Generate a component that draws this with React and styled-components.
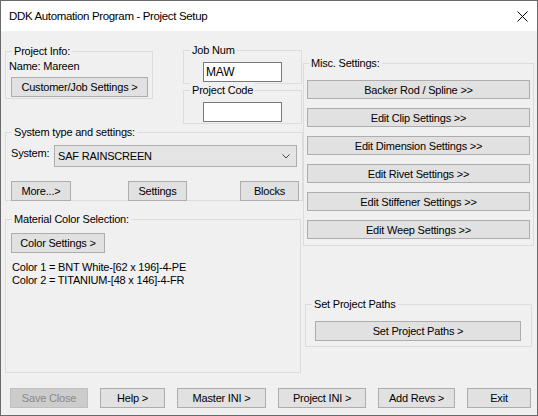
import React from 'react';
import styled, { createGlobalStyle } from 'styled-components';

const Global = createGlobalStyle`
  html, body {
    margin: 0;
    padding: 0;
    background: #f0f0f0;
  }
  * {
    box-sizing: border-box;
  }
`;

const Window = styled.div`
  width: 538px;
  height: 416px;
  border: 1px solid #6a6a6a;
  background: #f0f0f0;
  display: flex;
  flex-direction: column;
  font-family: "Liberation Sans", Arial, sans-serif;
  font-size: 11px;
  letter-spacing: -0.2px;
  color: #000;
  overflow: hidden;
`;

const TitleBar = styled.div`
  height: 30px;
  flex: none;
  background: #fff;
  display: flex;
  align-items: center;
  justify-content: space-between;
  padding: 0 9px 0 8px;
  font-size: 11.5px;
  letter-spacing: -0.35px;
`;

const CloseIcon = styled.svg`
  width: 11px;
  height: 11px;
  margin-top: 1px;
`;

const Body = styled.div`
  flex: 1;
  display: flex;
  flex-direction: column;
`;

const Main = styled.div`
  display: flex;
  padding-left: 4px;
`;

const LeftCol = styled.div`
  width: 298px;
  display: flex;
  flex-direction: column;
  padding-top: 19px;
`;

const RightCol = styled.div`
  display: flex;
  flex-direction: column;
  padding-top: 32px;
`;

const TopRow = styled.div`
  display: flex;
  align-items: flex-start;
`;

const JobStack = styled.div`
  display: flex;
  flex-direction: column;
  gap: 6px;
  margin-left: 30px;
`;

const Group = styled.div`
  position: relative;
  flex: none;
  border: 1px solid #dcdcdc;
  width: ${p => p.$w}px;
  height: ${p => p.$h}px;
  margin-top: ${p => p.$mt || 0}px;
  margin-left: ${p => p.$ml || 0}px;
  display: flex;
  flex-direction: column;
  align-items: flex-start;
`;

const Legend = styled.span`
  position: absolute;
  top: -8px;
  left: ${p => p.$left || 6}px;
  padding: 0 2px;
  line-height: 14px;
  background: #f0f0f0;
  white-space: nowrap;
`;

const Label = styled.div`
  line-height: 13px;
  white-space: nowrap;
  width: ${p => (p.$w ? `${p.$w}px` : 'auto')};
  flex: none;
  margin-left: ${p => p.$ml || 0}px;
  margin-top: ${p => p.$mt || 0}px;
`;

const Button = styled.button`
  flex: none;
  width: ${p => p.$w}px;
  height: ${p => p.$h || 20}px;
  margin-top: ${p => p.$mt || 0}px;
  margin-left: ${p => p.$ml || 0}px;
  padding: 0;
  background: ${p => (p.disabled ? '#cccccc' : '#e1e1e1')};
  border: 1px solid ${p => (p.disabled ? '#bfbfbf' : '#adadad')};
  color: ${p => (p.disabled ? '#8a8a8a' : '#000')};
  font-family: inherit;
  font-size: 11px;
  letter-spacing: -0.2px;
  line-height: 16px;
  text-align: center;
  white-space: nowrap;
`;

const TextBox = styled.div`
  width: 79px;
  height: 20px;
  margin: 11px 0 0 19px;
  background: #fff;
  border: 1px solid #7a7a7a;
  padding: 1px 0 0 2px;
  font-size: 12px;
  line-height: 16px;
`;

const SystemRow = styled.div`
  display: flex;
  align-items: flex-start;
  margin: 12px 0 0 5px;
`;

const Combo = styled.div`
  width: 243px;
  height: 22px;
  background: #e5e5e5;
  border: 1px solid #adadad;
  display: flex;
  align-items: center;
  justify-content: space-between;
  padding: 0 6px 0 3px;
  font-size: 11px;
`;

const Chevron = styled.svg`
  width: 8px;
  height: 5px;
`;

const ButtonRow = styled.div`
  display: flex;
  width: 100%;
  padding: 0 3px 0 5px;
  margin-top: 14px;
`;

const Spacer = styled.div`
  flex: 1;
`;

const MiscList = styled.div`
  display: flex;
  flex-direction: column;
  gap: 9px;
  margin: 16px 0 0 3px;
`;

const ColorLines = styled.div`
  margin: 8px 0 0 6px;
  line-height: 13px;
`;

const Footer = styled.div`
  display: flex;
  gap: 12px;
  padding-left: 9px;
  margin-top: 15px;
`;

const miscButtons = [
  'Backer Rod / Spline >>',
  'Edit Clip Settings >>',
  'Edit Dimension Settings >>',
  'Edit Rivet Settings >>',
  'Edit Stiffener Settings >>',
  'Edit Weep Settings >>',
];

const footerButtons = [
  { label: 'Save  Close', w: 78, disabled: true },
  { label: 'Help >', w: 65 },
  { label: 'Master INI >', w: 89 },
  { label: 'Project INI >', w: 88 },
  { label: 'Add Revs >', w: 77 },
  { label: 'Exit', w: 64 },
];

export default function App() {
  return (
    <>
      <Global />
      <Window>
        <TitleBar>
          <span>DDK Automation Program - Project Setup</span>
          <CloseIcon viewBox="0 0 11 11">
            <path d="M0.5 0.5 L10.5 10.5 M10.5 0.5 L0.5 10.5" stroke="#000" strokeWidth="1" fill="none" />
          </CloseIcon>
        </TitleBar>
        <Body>
          <Main>
            <LeftCol>
              <TopRow>
                <Group $w={148} $h={48} $mt={1}>
                  <Legend>Project Info:</Legend>
                  <Label $ml={3} $mt={8}>Name: Mareen</Label>
                  <Button $w={137} $mt={4} $ml={5}>Customer/Job Settings &gt;</Button>
                </Group>
                <JobStack>
                  <Group $w={119} $h={34}>
                    <Legend>Job Num</Legend>
                    <TextBox>MAW</TextBox>
                  </Group>
                  <Group $w={119} $h={34}>
                    <Legend>Project Code</Legend>
                    <TextBox />
                  </Group>
                </JobStack>
              </TopRow>

              <Group $w={298} $h={69} $mt={8}>
                <Legend>System type and settings:</Legend>
                <SystemRow>
                  <Label $w={43} $mt={2}>System:</Label>
                  <Combo>
                    <span>SAF RAINSCREEN</span>
                    <Chevron viewBox="0 0 8 5">
                      <path d="M0.5 0.5 L4 4 L7.5 0.5" stroke="#444" strokeWidth="1" fill="none" />
                    </Chevron>
                  </Combo>
                </SystemRow>
                <ButtonRow>
                  <Button $w={60}>More...&gt;</Button>
                  <Button $w={59} $ml={57}>Settings</Button>
                  <Spacer />
                  <Button $w={59}>Blocks</Button>
                </ButtonRow>
              </Group>

              <Group $w={296} $h={154} $mt={18}>
                <Legend>Material Color Selection:</Legend>
                <Button $w={94} $mt={13} $ml={5}>Color Settings &gt;</Button>
                <ColorLines>
                  <div>Color 1 = BNT White-[62 x 196]-4-PE</div>
                  <div>Color 2 = TITANIUM-[48 x 146]-4-FR</div>
                </ColorLines>
              </Group>
            </LeftCol>

            <RightCol>
              <Group $w={231} $h={183}>
                <Legend $left={5}>Misc. Settings:</Legend>
                <MiscList>
                  {miscButtons.map(label => (
                    <Button key={label} $w={223} $h={19}>{label}</Button>
                  ))}
                </MiscList>
              </Group>
              <Group $w={227} $h={43} $mt={58} $ml={2}>
                <Legend>Set Project Paths</Legend>
                <Button $w={206} $mt={16} $ml={9}>Set Project Paths &gt;</Button>
              </Group>
            </RightCol>
          </Main>

          <Footer>
            {footerButtons.map(b => (
              <Button key={b.label} $w={b.w} disabled={b.disabled}>{b.label}</Button>
            ))}
          </Footer>
        </Body>
      </Window>
    </>
  );
}
